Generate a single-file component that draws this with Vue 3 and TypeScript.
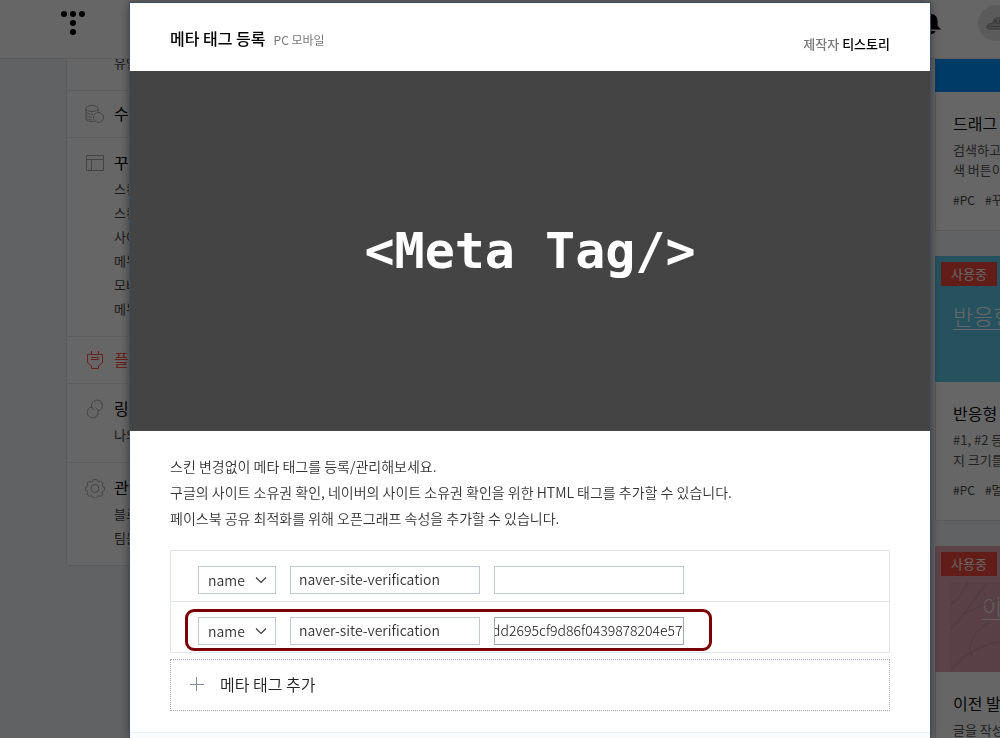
<script setup lang="ts">
import { onMounted, ref } from 'vue'

interface MenuSection {
  icon: string
  title: string
  items: string[]
  active?: boolean
}

interface PluginCard {
  theme: string
  cover: string
  used: boolean
  title: string
  lines: string[]
  tags: string[]
}

interface MetaRow {
  kind: string
  name: string
  content: string
  marked: boolean
}

const sections: MenuSection[] = [
  { icon: '', title: '', items: ['유입 경로'] },
  { icon: 'coins', title: '수익', items: [] },
  { icon: 'layout', title: '꾸미기', items: ['스킨 변경', '스킨 편집', '사이드바', '메뉴', '모바일', '메뉴바'] },
  { icon: 'plug', title: '플러그인', items: [], active: true },
  { icon: 'link', title: '링크', items: ['나의 링크'] },
  { icon: 'gear', title: '관리', items: ['블로그', '팀블로그'] },
]

const cards: PluginCard[] = [
  { theme: 'blue', cover: '', used: false, title: '드래그 검색', lines: ['검색하고 싶은 단어를 드래그하면 검', '색 버튼이 나타납니다.'], tags: ['#PC', '#꾸미기'] },
  { theme: 'teal', cover: '반응형 이미지', used: true, title: '반응형 이미지', lines: ['#1, #2 등 치환자로 넣은 이미', '지 크기를 조절합니다.'], tags: ['#PC', '#멀티미디어'] },
  { theme: 'pink', cover: '이전 글', used: true, title: '이전 발행 글', lines: ['글을 작성할 때 이전 글을 넣을', '수 있습니다.'], tags: ['#PC', '#글쓰기'] },
]

const rows = ref<MetaRow[]>([
  { kind: 'name', name: 'naver-site-verification', content: '', marked: false },
  { kind: 'name', name: 'naver-site-verification', content: 'dd2695cf9d86f0439878204e57', marked: true },
])

const rowList = ref<HTMLElement | null>(null)

function addRow(): void {
  rows.value.push({ kind: 'name', name: '', content: '', marked: false })
}

// A long content value shows its end, as after pasting.
onMounted(() => {
  rowList.value?.querySelectorAll<HTMLInputElement>('.value').forEach((el) => {
    el.scrollLeft = el.scrollWidth
  })
})
</script>

<template>
  <div class="page">
    <header class="topbar">
      <a class="logo" href="#" aria-label="Tistory">
        <svg width="26" height="26" viewBox="0 0 26 26">
          <circle cx="4" cy="4" r="3" /><circle cx="13" cy="4" r="3" /><circle cx="22" cy="4" r="3" />
          <circle cx="13" cy="13" r="3" /><circle cx="13" cy="22" r="3" />
        </svg>
      </a>
      <button class="bell" type="button" aria-label="알림">
        <svg width="20" height="22" viewBox="0 0 20 22">
          <path d="M10 1c-4 0-6.500 3-6.500 7v4.500L0 16.500h20l-3.500-4V8c0-4-2.500-7-6.500-7zM5.500 18h9c-.5 2-2 3-4.500 3s-4-1-4.500-3z" />
        </svg>
      </button>
      <button class="avatar" type="button" aria-label="프로필">
        <svg width="36" height="36" viewBox="0 0 36 36">
          <path d="M9 22c0-3 3-4 6-3 0-4 1-6 5-6s5 0 6 2c4 0 5 3 4 6s-2 3-6 3H13c-3 0-4 0-4-2z" fill="#c0c0c0" stroke="#8c8c8c" />
          <path d="M10 21c6 1 12 1 18-1M16 18h7" fill="none" stroke="#8c8c8c" />
          <circle cx="18" cy="16" r="1" fill="#777" /><circle cx="22" cy="16" r="1" fill="#777" />
        </svg>
      </button>
    </header>

    <div class="content">
      <nav class="sidebar">
        <section v-for="(s, i) in sections" :key="i" class="menu" :class="{ single: !s.items.length, active: s.active }">
          <a v-if="s.title" class="menu-title" href="#">
            <svg class="menu-icon" width="20" height="20" viewBox="0 0 20 20">
              <template v-if="s.icon === 'coins'">
                <ellipse cx="7" cy="4.500" rx="6" ry="3" />
                <path d="M1 4.500v3c0 1.500 2.500 2.800 7 2.800M13 4.500V8M1 7.500v3c0 1.500 2.500 2.600 6 2.600M1 10.500v3c0 1.500 2.500 2.500 6.200 2.500M1 13.500v1.500c0 1.600 3 2.900 8 2.600" />
                <circle cx="13.500" cy="13.500" r="5" />
              </template>
              <template v-else-if="s.icon === 'layout'">
                <path d="M1.500 2.500h17v15h-17zM1.500 6.500h17M6.500 6.500v11" />
              </template>
              <template v-else-if="s.icon === 'plug'">
                <path d="M2.500 4.500h15v8l-4 3.500v2.500h-7V16l-4-3.500zM6.500 1v3.500M13.500 1v3.500M6 7.500h8M6 9.500h8" />
              </template>
              <template v-else-if="s.icon === 'link'">
                <path d="M9 11.200a5.500 5.500 0 1 1 3.800.8M7.200 7.900a5.500 5.500 0 1 0 4 1.300" />
              </template>
              <template v-else>
                <path d="M8.300 1.500h3.400l.7 1.800 1.700.7 1.800-.8 2 2-.8 1.800.7 1.600 1.700.7v2.800l-1.700.9-.7 1.700.8 1.800-2 2-1.800-.8-1.700.7-.7 1.600H8.300l-.7-1.600-1.700-.7-1.800.8-2-2 .8-1.800-.7-1.700-1.700-.9V9.300l1.700-.7.7-1.600-.8-1.800 2-2 1.800.8 1.700-.7z" />
                <circle cx="10" cy="10.500" r="4" />
              </template>
            </svg>
            {{ s.title }}
          </a>
          <ul v-if="s.items.length" class="menu-items">
            <li v-for="item in s.items" :key="item"><a href="#">{{ item }}</a></li>
          </ul>
        </section>
      </nav>

      <main class="cards">
        <article v-for="c in cards" :key="c.title" class="card">
          <div class="cover" :class="c.theme">
            <span v-if="c.used" class="badge">사용중</span>
            <span v-if="c.cover" class="cover-title">{{ c.cover }}</span>
            <svg v-if="c.theme === 'pink'" class="branches" viewBox="0 0 200 90" width="200" height="90">
              <path d="M0 48C14 34 22 20 36 2M12 32c14-4 24-14 50-16M0 22c10-4 12-12 18-22M0 88c14-12 24-26 60-30M22 74c-6-14 4-26 18-34" />
            </svg>
          </div>
          <div class="card-body">
            <h3>{{ c.title }}</h3>
            <p><span v-for="l in c.lines" :key="l">{{ l }}</span></p>
            <div class="tags"><a v-for="t in c.tags" :key="t" href="#">{{ t }}</a></div>
          </div>
        </article>
      </main>
    </div>

    <div class="dim"></div>

    <div class="modal" role="dialog" aria-labelledby="modal-title">
      <div class="modal-head">
        <h2 id="modal-title">메타 태그 등록</h2>
        <span class="platform">PC 모바일</span>
        <span class="maker">제작자 <a href="#">티스토리</a></span>
      </div>
      <div class="hero">&lt;Meta Tag/&gt;</div>
      <div class="modal-body">
        <p class="intro">스킨 변경없이 메타 태그를 등록/관리해보세요.</p>
        <p class="intro">구글의 사이트 소유권 확인, 네이버의 사이트 소유권 확인을 위한 HTML 태그를 추가할 수 있습니다.</p>
        <p class="intro">페이스북 공유 최적화를 위해 오픈그래프 속성을 추가할 수 있습니다.</p>
        <div ref="rowList" class="rows">
          <div v-for="(r, i) in rows" :key="i" class="row">
            <div class="select">
              <select v-model="r.kind" aria-label="속성 종류">
                <option>name</option>
                <option>property</option>
              </select>
              <svg width="12" height="8" viewBox="0 0 12 8"><path d="M1 1.500l5 5 5-5" /></svg>
            </div>
            <input v-model="r.name" type="text" aria-label="속성 값" />
            <input v-model="r.content" class="value" type="text" aria-label="content" />
            <div v-if="r.marked" class="mark"></div>
          </div>
        </div>
        <button class="add" type="button" @click="addRow">
          <svg width="14" height="14" viewBox="0 0 14 14"><path d="M0 7.500h14M6.500 0v14" /></svg>
          메타 태그 추가
        </button>
      </div>
      <div class="modal-foot"></div>
    </div>
  </div>
</template>

<style>
body {
  overflow: hidden;
}
</style>

<style scoped>
.page {
  height: 100vh;
  display: flex;
  flex-direction: column;
  overflow: hidden;
  background: #f3f5f8;
  font-family: "Noto Sans CJK KR", "Noto Sans", sans-serif;
  color: #333;
}
a { color: inherit; text-decoration: none; }
button { margin: 0; padding: 0; border: 0; background: none; font: inherit; color: inherit; cursor: pointer; }
h2, h3, p, ul { margin: 0; padding: 0; font-weight: 400; }
li { list-style: none; }
svg { display: block; }

.topbar {
  flex: none;
  display: flex;
  align-items: flex-start;
  height: 59px;
  padding: 5px 0 0 60px;
  border-bottom: 1px solid #e6e8ea;
  box-sizing: border-box;
  background: #fff;
  overflow: hidden;
}
.logo { padding-top: 5px; }
.bell { margin-left: 835px; padding-top: 8px; }
.avatar { margin-left: 37px; border-radius: 18px; background: #e4e4e4; }
.bell, .avatar { flex: none; }

.content { flex: 1; display: flex; align-items: flex-start; min-height: 0; overflow: hidden; }
.sidebar {
  flex: none;
  width: 228px;
  margin: -9px 0 0 66px;
  background: #fff;
  border: 1px solid #e2e4e8;
}
.menu { padding: 13px 18px 15px; border-bottom: 1px solid #ebebeb; }
.menu:first-child { padding-top: 0; }
.menu:last-child { border-bottom: 0; }
.menu.single { padding: 11px 18px; }
.menu-title { display: flex; gap: 9px; height: 24px; font-size: 16px; line-height: 22px; color: #000; }
.menu-icon { padding-top: 2px; fill: none; stroke: #aaa; stroke-width: 1; }
.menu.active .menu-title { color: #f54; }
.menu.active .menu-icon { stroke: #f54; }
.menu-items { padding: 2px 0 0 29px; font-size: 13px; line-height: 24px; color: #444; }
.menu:first-child .menu-items { padding-top: 0; }

.cards { flex: none; width: 256px; margin: -93px 0 0 639px; display: flex; flex-direction: column; gap: 25px; }
.card { position: relative; }
.cover { position: relative; height: 126px; overflow: hidden; }
.blue { background: #0092ff; }
.teal { background: #5cccea; }
.pink { background: #e7a8ba; }
.badge {
  position: absolute;
  top: 6px;
  left: 6px;
  padding: 0 10px;
  background: #f54a3c;
  color: #fff;
  font-size: 13px;
  line-height: 24px;
}
.cover-title {
  position: absolute;
  top: 45px;
  left: 18px;
  border-bottom: 1px solid #fff;
  color: #fff;
  font-size: 22px;
  font-weight: 300;
  line-height: 28px;
}
.pink .cover-title { left: 47px; }
.branches { position: absolute; left: 15px; bottom: 0; fill: none; stroke: #c78f9c; stroke-width: 1; background: rgba(150, 110, 110, .12); }
.card-body { height: 139px; box-sizing: border-box; padding: 19px 17px 0; border: 1px solid #dcdfe4; border-top: 0; background: #fff; }
.card h3 { font-size: 16px; line-height: 24px; color: #111; white-space: nowrap; }
.card p { padding-top: 5px; font-size: 13px; line-height: 20px; color: #555; }
.card p span { display: block; white-space: nowrap; }
.tags { display: flex; gap: 10px; padding-top: 10px; font-size: 12px; line-height: 20px; color: #444; }

.dim { position: fixed; inset: 0; background: rgba(0, 0, 0, .6); }

.modal {
  position: fixed;
  top: 3px;
  bottom: 0;
  left: 13%;
  right: 7%;
  display: flex;
  flex-direction: column;
  background: #fff;
  box-shadow: 0 0 0 1px #3f4d63, 0 0 10px rgba(0, 0, 0, .5);
}
.modal-head { flex: none; display: flex; align-items: center; height: 68px; padding: 2px 40px 0; box-sizing: border-box; }
.modal-head h2 { font-size: 16px; font-weight: 500; line-height: 24px; color: #000; }
.platform { padding: 4px 0 0 8px; font-size: 12px; line-height: 20px; color: #777; }
.maker { margin-left: auto; padding-top: 11px; font-size: 13px; line-height: 20px; font-weight: 500; color: #777; }
.maker a { color: #000; }
.hero {
  flex: none;
  height: 360px;
  background: #444;
  color: #fff;
  font: bold 50px/360px "DejaVu Sans Mono", monospace;
  text-align: center;
}
.modal-body { flex: none; padding: 22px 40px 21px; }
.intro { font-size: 14px; line-height: 26px; font-weight: 350; color: #333; }
.rows { margin-top: 19px; border: 1px solid #e1e3f0; }
.row { position: relative; display: flex; gap: 14px; padding: 15px 27px 7px; }
.row + .row { border-top: 1px solid #e1e3f0; }
.select { position: relative; }
.select svg { position: absolute; right: 9px; top: 10px; fill: none; stroke: #333; stroke-width: 1.1; pointer-events: none; }
select, input {
  box-sizing: border-box;
  height: 28px;
  margin: 0;
  border: 1px solid #c2cad6;
  border-radius: 0;
  outline: 0;
  background: #fff;
  color: #333;
  font: 350 14px/20px "Noto Sans CJK KR", "Noto Sans", sans-serif;
}
select { display: block; width: 78px; padding: 0 0 0 9px; appearance: none; }
input { width: 190px; padding: 0 8px 2px; }
.value { padding: 0 0 2px; font-weight: 300; color: #111; }
.row + .row .value { border-color: #a0a8b4; }
.mark { position: absolute; top: 7px; left: 14px; width: 527px; height: 42px; box-sizing: border-box; border: 3px solid #7b0006; border-radius: 9px; pointer-events: none; }
.add {
  display: flex;
  align-items: center;
  gap: 16px;
  width: 100%;
  height: 52px;
  margin-top: 6px;
  padding: 0 19px 2px;
  box-sizing: border-box;
  border: 1px dotted #a5a9b5;
  font-size: 16px;
  font-weight: 350;
  color: #222;
}
.add svg { stroke: #80889a; stroke-width: 1; }
.modal-foot { flex: 1; border-top: 1px solid #eff0f2; background: #fafbfc; }
</style>
